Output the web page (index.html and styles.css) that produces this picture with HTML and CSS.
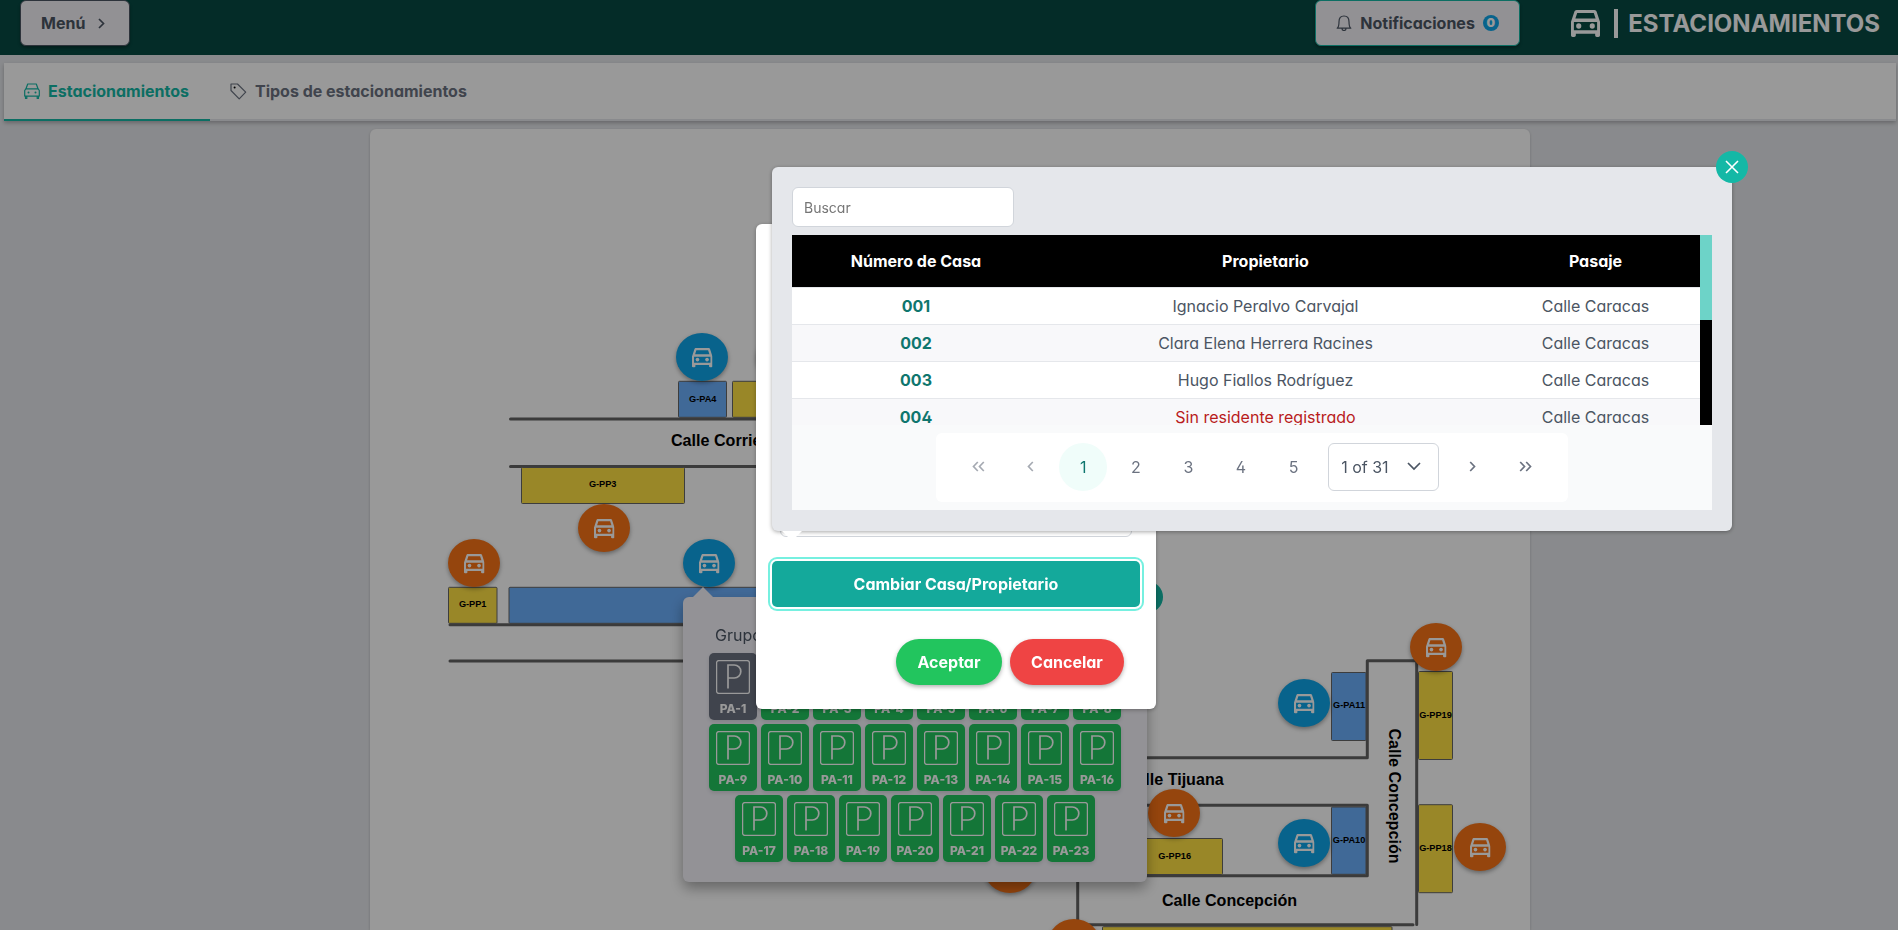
FILE: index.html
```html
<!DOCTYPE html>
<html lang="es">
<head>
<meta charset="utf-8">
<title>Estacionamientos</title>
<link rel="stylesheet" href="styles.css">
</head>
<body>
<svg class="defs" aria-hidden="true">
  <symbol id="car" viewBox="3 5 18 16" preserveAspectRatio="none"><path fill="currentColor" d="M18.920 6.010C18.720 5.420 18.160 5 17.500 5h-11c-.66 0-1.210.42-1.420 1.010L3 12v8c0 .55.45 1 1 1h1c.55 0 1-.45 1-1v-1h12v1c0 .55.45 1 1 1h1c.55 0 1-.45 1-1v-8zM6.850 6.800h10.290l1.140 3.300H5.710zM19.200 17H4.800v-4.900h14.400z"/><circle cx="7.800" cy="14.500" r="1.600" fill="currentColor"/><circle cx="16.200" cy="14.500" r="1.600" fill="currentColor"/></symbol>
  <symbol id="car-thin" viewBox="0 0 16 16"><path d="M3.700 1h8.600l1.700 4.700 1.300 1.800v5.600H.7V7.500L2 5.700zM2 5.900h12M1.500 13v2.400h1.300V13M13.200 13v2.400h1.300V13" fill="none" stroke="currentColor" stroke-width="1.200" stroke-linejoin="round"/><circle cx="4.500" cy="9.500" r="1" fill="currentColor"/><circle cx="11.500" cy="9.500" r="1" fill="currentColor"/></symbol>
  <symbol id="park" viewBox="0 0 34 34"><rect x=".6" y=".6" width="32.800" height="32.800" rx="2.200" fill="none" stroke="currentColor" stroke-width="1.300"/><path d="M12 28.500V5h6.300a6.300 6.300 0 0 1 0 13H12" fill="none" stroke="currentColor" stroke-width="1.700"/></symbol>
  <symbol id="marker" viewBox="-26 -24 52 48" overflow="visible"><ellipse rx="26" ry="24"/><use href="#car" x="-10" y="-9" width="20.500" height="19.500"/></symbol>
</svg>

<div class="page">
  <header class="navbar">
    <button class="btn menu">Menú <svg width="7" height="11" viewBox="0 0 7 11"><path d="M1 1l4.500 4.500L1 10" fill="none" stroke="currentColor" stroke-width="1.700"/></svg></button>
    <div class="nav-right">
      <button class="btn notif"><svg width="16" height="16" viewBox="0 0 16 16"><path d="M1.200 13.200h13.600C13 12 13 10 13 6.800 13 3.300 11 1 8 1S3 3.300 3 6.800C3 10 3 12 1.200 13.200zM6 13.500a2 2 0 0 0 4 0" fill="none" stroke="currentColor" stroke-width="1.200" stroke-linejoin="round"/></svg><span>Notificaciones</span><b class="badge">0</b></button>
      <div class="brand"><svg width="29" height="27"><use href="#car" width="29" height="27"/></svg><i class="bar"></i><span>ESTACIONAMIENTOS</span></div>
    </div>
  </header>
  <nav class="tabs">
    <a class="tab active"><svg width="16" height="16"><use href="#car-thin"/></svg>Estacionamientos</a>
    <a class="tab"><svg width="17" height="17" viewBox="0 0 17 17"><path d="M1 1h6.500l8.200 8.200-6.500 6.600L1 7.500z" fill="none" stroke="currentColor" stroke-width="1.200" stroke-linejoin="round"/><circle cx="4.600" cy="4.600" r="1"/></svg>Tipos de estacionamientos</a>
  </nav>
  <main class="card">
    <svg class="map" width="1160" height="801" viewBox="370 129 1160 801">
      <g class="road">
        <path d="M510.500 419H900M510.500 466.500H900M450 624.700H900M450 661H900"/>
        <path d="M1100 757.700H1367.300V660.700H1416.700V924.500"/>
        <path d="M1100 805.300H1367.300V875.700H1077.700V924.700H1413"/>
      </g>
      <g class="public">
        <rect x="732.500" y="381.300" width="90" height="36"/>
        <rect x="521.500" y="467.500" width="163" height="36"/>
        <rect x="448.500" y="587.300" width="48.500" height="36"/>
        <rect x="1418.500" y="671.500" width="34" height="88"/>
        <rect x="1418.500" y="804.700" width="34" height="88"/>
        <rect x="1126.500" y="838.500" width="96" height="36"/>
        <rect x="1102.500" y="926.700" width="289.500" height="36"/>
      </g>
      <g class="private">
        <rect x="678.500" y="381.300" width="48" height="36"/>
        <rect x="509" y="587.300" width="400" height="36"/>
        <rect x="1331.500" y="672.500" width="34.500" height="68"/>
        <rect x="1331.500" y="807" width="34.500" height="67.300"/>
      </g>
      <g class="lot">
        <text x="702.700" y="402">G-PA4</text><text x="602.700" y="487">G-PP3</text><text x="472.700" y="607">G-PP1</text>
        <text x="1349" y="708">G-PA11</text><text x="1435.500" y="717.500">G-PP19</text><text x="1349" y="842.500">G-PA10</text><text x="1435.500" y="850.500">G-PP18</text><text x="1174.700" y="858.700">G-PP16</text>
      </g>
      <g class="street">
        <text x="671" y="446">Calle Corrientes</text>
        <text x="1223.700" y="785.300" text-anchor="end">Calle Tijuana</text>
        <text x="1162" y="905.600">Calle Concepción</text>
        <text transform="translate(1388.500 728.500) rotate(90)">Calle Concepción</text>
      </g>
      <g class="pins orange">
        <use href="#marker" x="756" y="333" width="52" height="48"/>
        <use href="#marker" x="578" y="504" width="52" height="48"/>
        <use href="#marker" x="448" y="539" width="52" height="48"/>
        <use href="#marker" x="1410" y="623" width="52" height="48"/>
        <use href="#marker" x="1148" y="789" width="52" height="48"/>
        <use href="#marker" x="1454" y="823" width="52" height="48"/>
        <use href="#marker" x="984" y="845" width="52" height="48"/>
        <use href="#marker" x="1048" y="919" width="52" height="48"/>
      </g>
      <g class="pins blue">
        <use href="#marker" x="676" y="333" width="52" height="48"/>
        <use href="#marker" x="683" y="539" width="52" height="48"/>
        <use href="#marker" x="1278" y="679" width="52" height="48"/>
        <use href="#marker" x="1278" y="819" width="52" height="48"/>
      </g>
    </svg>
  </main>
  <section class="group-panel">
    <i class="close-dot"></i>
    <p>Grupo G-PA2</p>
    <div class="slots" id="slots"></div>
  </section>
</div>

<div class="mask"></div>

<section class="dialog">
  <div class="field"></div>
  <button class="change">Cambiar Casa/Propietario</button>
  <div class="actions"><button class="pill ok">Aceptar</button><button class="pill no">Cancelar</button></div>
</section>

<section class="picker">
  <button class="close"><svg width="14" height="14" viewBox="0 0 14 14"><path d="M1 1l12 12M13 1L1 13" stroke="currentColor" stroke-width="1.600"/></svg></button>
  <input class="search" placeholder="Buscar">
  <div class="scroller">
    <table>
      <colgroup><col class="c1"><col class="c2"><col class="c3"></colgroup>
      <thead><tr><th>Número de Casa</th><th>Propietario</th><th>Pasaje</th></tr></thead>
      <tbody>
        <tr><td>001</td><td>Ignacio Peralvo Carvajal</td><td>Calle Caracas</td></tr>
        <tr><td>002</td><td>Clara Elena Herrera Racines</td><td>Calle Caracas</td></tr>
        <tr><td>003</td><td>Hugo Fiallos Rodríguez</td><td>Calle Caracas</td></tr>
        <tr><td>004</td><td class="none">Sin residente registrado</td><td>Calle Caracas</td></tr>
      </tbody>
    </table>
    <div class="track"><div class="thumb"></div></div>
  </div>
  <div class="foot">
    <div class="paginator">
      <span class="pg off"><svg width="13" height="11" viewBox="0 0 13 11"><path d="M5.800 1L1.500 5.500l4.300 4.500M11.800 1L7.500 5.500l4.300 4.500"/></svg></span>
      <span class="pg off"><svg width="7" height="11" viewBox="0 0 7 11"><path d="M5.800 1L1.500 5.500l4.300 4.500"/></svg></span>
      <span class="pg current">1</span><span class="pg">2</span><span class="pg">3</span><span class="pg">4</span><span class="pg">5</span>
      <span class="select">1 of 31<svg width="14" height="9" viewBox="0 0 14 9"><path d="M1 1l6 6 6-6"/></svg></span>
      <span class="pg"><svg width="7" height="11" viewBox="0 0 7 11"><path d="M1.200 1l4.300 4.500L1.200 10"/></svg></span>
      <span class="pg"><svg width="13" height="11" viewBox="0 0 13 11"><path d="M1.200 1l4.300 4.500L1.200 10M7.200 1l4.300 4.500L7.200 10"/></svg></span>
    </div>
  </div>
</section>
<script src="slots.js"></script>
</body>
</html>
```
FILE: styles.css
```css
* { box-sizing: border-box; }
body { margin: 0; height: 930px; overflow: hidden; position: relative; background: #e5e7eb; color: #4b5563; font: 16px/24px Inter, "Noto Sans", sans-serif; font-feature-settings: "cv02", "cv03", "cv04", "cv11"; }
button, input { font: inherit; font-feature-settings: inherit; border: 0; margin: 0; }
svg { display: block; flex: none; }
.defs { position: absolute; width: 0; height: 0; }
.page { height: 930px; overflow: hidden; }

.navbar { height: 55px; background: #074a43; display: flex; justify-content: space-between; align-items: flex-start; padding: 0 18px 0 20px; }
.btn { height: 46px; border: 1px solid #4b5563; border-radius: 6px; background: #f4f2f7; color: #4b5563; font-weight: 700; display: flex; align-items: center; box-shadow: 0 2px 3px rgba(0,0,0,.3); }
.menu { width: 110px; padding: 0 20px; gap: 13px; }
.nav-right { display: flex; }
.notif { width: 205px; padding: 0 20px; border-color: #14b8a6; gap: 8px; }
.badge { width: 16px; height: 16px; border-radius: 50%; background: #0ea5e9; color: #fff; font-size: 12px; line-height: 16px; text-align: center; }
.brand { margin-left: 51px; height: 47px; display: flex; align-items: center; color: #fff; font-size: 24px; font-weight: 700; }
.bar { width: 4px; height: 29px; background: #fff; margin: 0 10px 0 14px; }

.tabs { margin: 8px 2px 8px 4px; height: 58px; background: #fff; display: flex; box-shadow: 0 2px 4px rgba(0,0,0,.25), inset 0 -2px #e5e7eb; }
.tab { display: flex; align-items: center; gap: 8px; padding: 0 20px 2px; font-weight: 700; color: #6b7280; }
.tab.active { width: 206px; color: #14b8a6; border-bottom: 2px solid; padding-bottom: 0; }

.card { width: 1160px; height: 801px; margin-left: 370px; background: #fff; border-radius: 6px 6px 0 0; box-shadow: 0 1px 3px rgba(0,0,0,.2); }
.road path { fill: none; stroke: #636363; stroke-width: 3; stroke-linecap: round; stroke-linejoin: round; }
.public rect, .private rect { stroke: #666; stroke-width: 1; rx: 1px; }
.public rect { fill: #ffe144; }
.private rect { fill: #6caffc; }
.lot text { font: bold 9.200px "Liberation Sans", sans-serif; text-anchor: middle; fill: #000; }
.street text { font: bold 16.100px "Liberation Sans", sans-serif; fill: #000; }
.pins { color: #fff; filter: drop-shadow(0 2px 2px rgba(0,0,0,.35)); }
.orange { fill: #f97316; }
.blue { fill: #0ea5e9; }

.group-panel { position: absolute; left: 683px; top: 597px; width: 464px; height: 285px; border-radius: 6px; background: #f5f4fb; padding: 26px 24px; box-shadow: 0 6px 14px rgba(0,0,0,.35); }
.group-panel::before { content: ""; position: absolute; left: 10px; top: -10px; border: 10px solid transparent; border-top: 0; border-bottom-color: #f5f4fb; }
.group-panel p { margin: 0 0 6px 8px; }
.close-dot { position: absolute; right: -16px; top: -16px; width: 32px; height: 32px; border-radius: 50%; background: #14b8a6; }
.slots { display: flex; flex-wrap: wrap; justify-content: center; gap: 4px; }
.slot { width: 48px; height: 67px; border-radius: 5px; background: #22c55e; color: #fff; padding-top: 7px; display: flex; flex-direction: column; align-items: center; gap: 6px; font-size: 12px; line-height: 18px; font-weight: 800; box-shadow: 0 2px 4px rgba(0,0,0,.12); }
.slot.taken { background: #6b7280; }

.mask { position: absolute; inset: 0; background: rgba(0,0,0,.4); }

.dialog { position: absolute; left: 756px; top: 224px; width: 400px; height: 485px; background: #fff; border-radius: 6px; padding: 16px; box-shadow: 0 1px 4px rgba(0,0,0,.3); display: flex; flex-direction: column; justify-content: flex-end; }
.field { height: 40px; margin: 0 8px 24px; border: 1px solid #d1d5db; border-radius: 6px; }
.change { height: 46px; flex: none; border-radius: 5px; background: #14a99b; color: #fff; font-weight: 700; box-shadow: 0 0 0 2px #fff, 0 0 0 4px #76f0e0; }
.actions { display: flex; justify-content: flex-end; gap: 8px; margin: 32px 16px 8px 0; }
.pill { height: 46px; border-radius: 23px; color: #fff; font-weight: 700; padding: 0; box-shadow: 0 2px 4px rgba(0,0,0,.3); }
.ok { width: 106px; background: #22c55e; }
.no { width: 114px; background: #ef4444; }

.picker { position: absolute; left: 772px; top: 167px; width: 960px; height: 364px; background: #e5e7eb; border-radius: 6px; padding: 20px; box-shadow: 0 1px 4px rgba(0,0,0,.35); }
.picker::after { content: ""; position: absolute; left: 10px; bottom: -10px; border: 10px solid transparent; border-bottom: 0; border-top-color: #fff; }
.close { position: absolute; right: -16px; top: -16px; width: 32px; height: 32px; border-radius: 50%; background: #14b8a6; color: #fff; padding: 9px; }
.search { display: block; width: 222px; height: 40px; border: 1px solid #d1d5db; border-radius: 6px; background: #fff; padding: 0 11px; font-size: 14px; margin-bottom: 8px; }
.search::placeholder { color: #757575; opacity: 1; }
.scroller { height: 190px; overflow: hidden; display: flex; }
table { width: 908px; table-layout: fixed; border-collapse: separate; border-spacing: 0; background: #fff; align-self: flex-start; }
.c1 { width: 248px; } .c2 { width: 451px; } .c3 { width: 209px; }
th { height: 53px; background: #000; color: #fff; font-weight: 700; padding: 0; border-bottom: 1px solid #e5e7eb; }
td { height: 37px; text-align: center; padding: 0; border-bottom: 1px solid #e5e7eb; }
tbody tr:nth-child(even) { background: #f8f8fa; }
td:first-child { color: #0f766e; font-weight: 700; }
td.none { color: #b91c1c; }
.track { width: 12px; height: 190px; background: #000; }
.thumb { height: 85px; background: #6dd3c8; }
.foot { height: 85px; background: #f9fafb; padding: 8px 144px; }
.paginator { height: 69px; background: #fff; border-radius: 6px; display: flex; align-items: center; padding: 0 0 2px 18px; gap: 4.600px; color: #6b7280; }
.pg { width: 48px; height: 48px; border-radius: 50%; display: flex; align-items: center; justify-content: center; flex: none; }
.paginator path { fill: none; stroke: currentColor; stroke-width: 1.700; }
.off { opacity: .6; }
.current { background: #f0fdfa; color: #0f766e; }
.select { width: 111px; height: 48px; border: 1px solid #d1d5db; border-radius: 6px; display: flex; align-items: center; justify-content: space-between; padding: 0 17px 0 12px; margin: 0 5px 0 6px; color: #4b5563; }
```
FILE: slots.js
```js
const slots = document.getElementById('slots');
for (let n = 1; n <= 23; n++) {
  const slot = document.createElement('div');
  slot.className = n === 1 ? 'slot taken' : 'slot';
  slot.innerHTML = '<svg width="34" height="34"><use href="#park"/></svg>PA-' + n;
  slots.append(slot);
}
```
